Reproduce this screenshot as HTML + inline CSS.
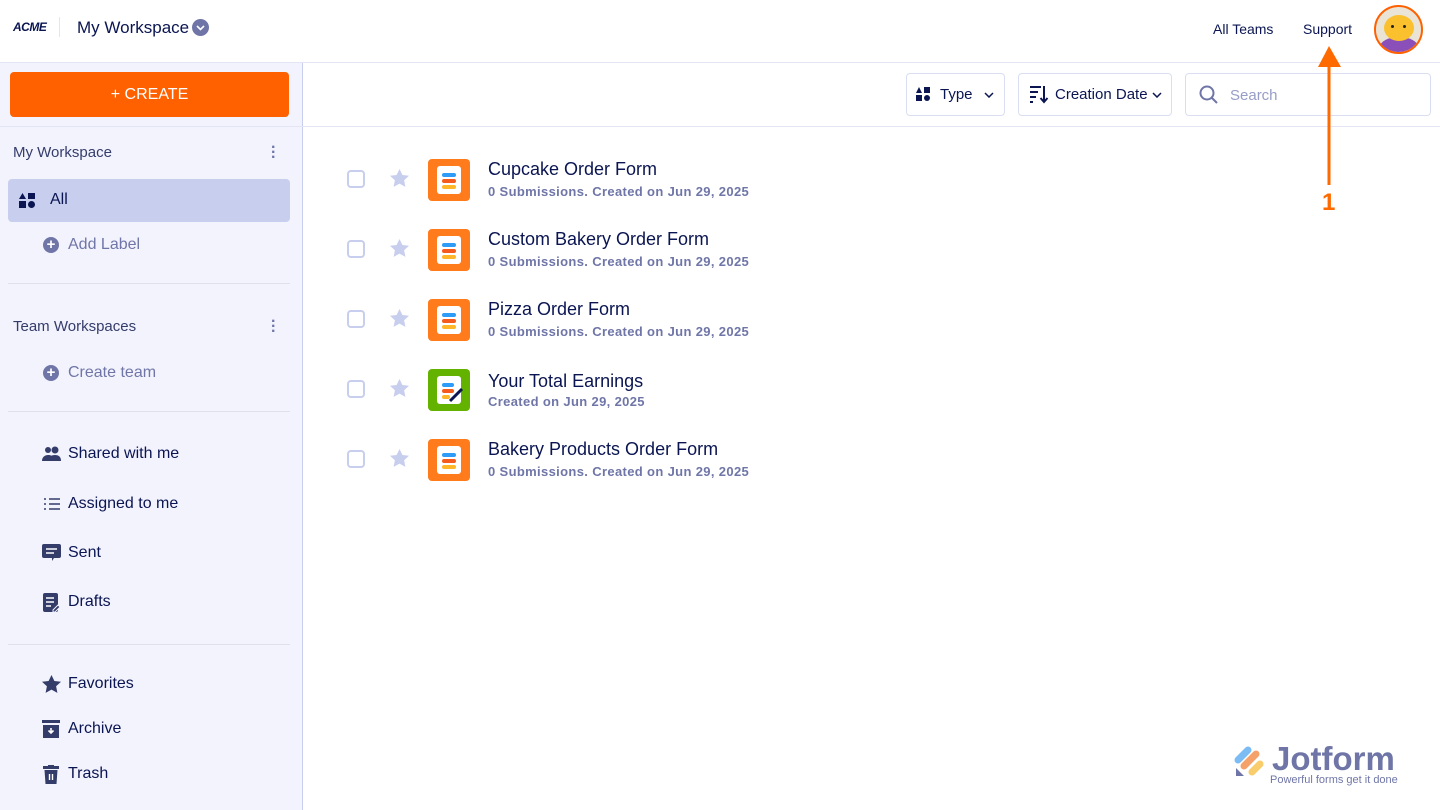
<!DOCTYPE html>
<html><head><meta charset="utf-8"><style>
*{margin:0;padding:0;box-sizing:border-box}
body{width:1440px;height:810px;overflow:hidden;background:#fff;font-family:"Liberation Sans",sans-serif;color:#0a1551;position:relative}
.a{position:absolute;white-space:nowrap}
.hdr{left:0;top:0;width:1440px;height:63px;border-bottom:1px solid #e3e5f5;background:#fff}
.side{left:0;top:63px;width:303px;height:747px;background:#f3f3fe;border-right:1px solid #c8ceed}
.bar{left:303px;top:63px;width:1137px;height:64px;border-bottom:1px solid #e3e5f5}
.t{font-size:16px}
.sec{font-size:15px;color:#343c6a}
.mut{color:#6f76a7}
.hr{left:8px;width:282px;height:1px;background:#dfe1ea}
.btn{border:1px solid #dadef3;border-radius:4px;background:#fff;height:43px;top:73px}
.row{width:1440px;height:70px}
.row .cb{width:18px;height:18px;border:2px solid #c8ceed;border-radius:4px;background:#fff}
.ti{font-size:18px;color:#0a1551}
.sub{font-size:13px;color:#6f76a7;font-weight:bold;letter-spacing:0.35px}
.ic{width:42px;height:42px;border-radius:4px;background:#ff7b1c}
.ic i{position:absolute;left:9px;top:7px;width:24px;height:28px;background:#fff;border-radius:3px}
.ic b{position:absolute;left:14px;width:14px;height:3.5px;border-radius:2px}
</style></head><body>
<div class="a hdr"></div>
<div class="a" style="left:13px;top:20px;font-size:12px;font-weight:900;font-style:italic;letter-spacing:-0.5px">ACME</div>
<div class="a" style="left:59px;top:17px;width:1px;height:20px;background:#e3e5f5"></div>
<div class="a t" style="left:77px;top:18px;font-size:17px;color:#0a1551">My Workspace</div>
<div class="a" style="left:192px;top:19px;width:17px;height:17px;border-radius:50%;background:#6f76a7"><svg width="17" height="17"><path d="M5 7l3.5 3.5L12 7" stroke="#fff" stroke-width="1.6" fill="none"/></svg></div>
<div class="a" style="left:1213px;top:21px;font-size:14px">All Teams</div>
<div class="a" style="left:1303px;top:21px;font-size:14px">Support</div>
<div class="a" style="left:1374px;top:5px;width:49px;height:49px;border-radius:50%;border:2px solid #ff6100;background:#e9e4d6;overflow:hidden">
<div class="a" style="left:4px;top:30px;width:38px;height:20px;border-radius:50% 50% 0 0;background:#8a4fb8"></div>
<div class="a" style="left:8px;top:8px;width:30px;height:26px;border-radius:50%;background:#fbc02d"></div>
<div class="a" style="left:15px;top:18px;width:3px;height:3px;border-radius:50%;background:#222"></div>
<div class="a" style="left:27px;top:18px;width:3px;height:3px;border-radius:50%;background:#222"></div></div>

<div class="a side"></div>
<div class="a" style="left:10px;top:72px;width:279px;height:45px;background:#ff6100;border-radius:4px;color:#fff;font-size:16px;text-align:center;line-height:45px">+ CREATE</div>
<div class="a" style="left:0;top:126px;width:303px;height:1px;background:#e3e5f5"></div>
<div class="a sec" style="left:13px;top:144px">My Workspace</div>
<div class="a" style="left:271px;top:145px;color:#6f76a7;font-size:16px;font-weight:bold;line-height:5px">·<br>·<br>·</div>
<div class="a" style="left:8px;top:179px;width:282px;height:43px;background:#c8ceed;border-radius:4px"></div>
<svg class="a" style="left:19px;top:193px" width="17" height="15"><path d="M0 6L3.5 0L7 6Z" fill="#0a1551"/><rect x="9" y="0" width="7" height="6" fill="#0a1551"/><rect x="0" y="8" width="7" height="7" fill="#0a1551"/><circle cx="12.5" cy="11.5" r="3.5" fill="#0a1551"/></svg>
<div class="a t" style="left:50px;top:191px">All</div>
<div class="a" style="left:43px;top:237px;width:16px;height:16px;border-radius:50%;background:#6f76a7;color:#fff;font-size:15px;line-height:16px;text-align:center;font-weight:bold">+</div>
<div class="a t mut" style="left:68px;top:236px">Add Label</div>
<div class="a hr" style="top:283px"></div>
<div class="a sec" style="left:13px;top:318px">Team Workspaces</div>
<div class="a" style="left:271px;top:319px;color:#6f76a7;font-size:16px;font-weight:bold;line-height:5px">·<br>·<br>·</div>
<div class="a" style="left:43px;top:365px;width:16px;height:16px;border-radius:50%;background:#6f76a7;color:#fff;font-size:15px;line-height:16px;text-align:center;font-weight:bold">+</div>
<div class="a t mut" style="left:68px;top:364px">Create team</div>
<div class="a hr" style="top:411px"></div>
<svg class="a" style="left:42px;top:446px" width="20" height="16" fill="#343c6a"><circle cx="6" cy="4" r="3"/><circle cx="13" cy="4" r="3.5"/><path d="M0 15c0-4 3-6 6-6s4 1 4 2v4z M6 15c0-4 3-6 7-6s6 2 6 6z"/></svg>
<div class="a t" style="left:68px;top:445px">Shared with me</div>
<svg class="a" style="left:43px;top:497px" width="17" height="14" stroke="#343c6a" stroke-width="1.5"><path d="M6 2h11M6 7h11M6 12h11M1 2h2M1 7h2M1 12h2"/></svg>
<div class="a t" style="left:68px;top:495px">Assigned to me</div>
<svg class="a" style="left:42px;top:544px" width="19" height="18" fill="#343c6a"><path d="M2 0h15a2 2 0 0 1 2 2v10a2 2 0 0 1-2 2H12l-2 3v-3H2a2 2 0 0 1-2-2V2a2 2 0 0 1 2-2z"/><path d="M4 5h11M4 9h8" stroke="#fff" stroke-width="1.6"/></svg>
<div class="a t" style="left:68px;top:544px">Sent</div>
<svg class="a" style="left:43px;top:593px" width="17" height="19" fill="#343c6a"><rect width="15" height="19" rx="2"/><path d="M3 5h8M3 9h8M3 13h5" stroke="#fff" stroke-width="1.5"/><path d="M10 17l5-5 2 2-5 5h-2z" stroke="#f3f3fe" stroke-width="1"/></svg>
<div class="a t" style="left:68px;top:593px">Drafts</div>
<div class="a hr" style="top:644px"></div>
<svg class="a" style="left:42px;top:675px" width="19" height="18"><path d="M9.5 0l2.9 6 6.6.8-4.9 4.5 1.3 6.6-5.9-3.3-5.9 3.3 1.3-6.6L0 6.8 6.6 6z" fill="#343c6a"/></svg>
<div class="a t" style="left:68px;top:675px">Favorites</div>
<svg class="a" style="left:42px;top:720px" width="18" height="18" fill="#343c6a"><rect width="18" height="3"/><rect x="1" y="5" width="16" height="13"/><path d="M9 8v5M6.5 10.5L9 13l2.5-2.5" stroke="#fff" stroke-width="1.6" fill="none"/></svg>
<div class="a t" style="left:68px;top:720px">Archive</div>
<svg class="a" style="left:43px;top:765px" width="16" height="19" fill="#343c6a"><rect x="0" y="1" width="16" height="3"/><rect x="5" y="0" width="6" height="2"/><path d="M1.5 5h13l-1 14h-11z"/><path d="M6.5 9v6M9.5 9v6" stroke="#fff" stroke-width="1.4"/></svg>
<div class="a t" style="left:68px;top:765px">Trash</div>

<div class="a bar"></div>
<div class="a btn" style="left:906px;width:99px"></div>
<svg class="a" style="left:916px;top:87px" width="15" height="14"><path d="M0 6L3 0L6 6Z" fill="#0a1551"/><rect x="8" y="0" width="6" height="6" fill="#0a1551"/><rect x="0" y="8" width="6" height="6" fill="#0a1551"/><circle cx="11" cy="11" r="3" fill="#0a1551"/></svg>
<div class="a" style="left:940px;top:86px;font-size:15px">Type</div>
<svg class="a" style="left:984px;top:92px" width="10" height="6"><path d="M1 1l4 4 4-4" stroke="#0a1551" stroke-width="1.5" fill="none"/></svg>
<div class="a btn" style="left:1018px;width:154px"></div>
<svg class="a" style="left:1029px;top:84px" width="20" height="20" stroke="#0a1551" stroke-width="2"><path d="M1 3h11M1 8h8M1 13h6M1 18h3M15 2v15M11.5 14l3.5 4 3.5-4" fill="none"/></svg>
<div class="a" style="left:1055px;top:86px;font-size:15px">Creation Date</div>
<svg class="a" style="left:1152px;top:92px" width="10" height="6"><path d="M1 1l4 4 4-4" stroke="#0a1551" stroke-width="1.5" fill="none"/></svg>
<div class="a btn" style="left:1185px;width:246px"></div>
<svg class="a" style="left:1199px;top:85px" width="20" height="20" stroke="#6f76a7" stroke-width="2" fill="none"><circle cx="8" cy="8" r="6.5"/><path d="M13 13l5 5"/></svg>
<div class="a" style="left:1230px;top:87px;font-size:15px;color:#979dc6">Search</div>

<svg class="a" style="left:1310px;top:40px" width="40" height="175"><path d="M19 12 L19 145" stroke="#ff6a00" stroke-width="3"/><path d="M8 27 L19 6 L31 27 Z" fill="#ff6a00"/><text x="12" y="170" font-family="Liberation Sans" font-weight="bold" font-size="24" fill="#ff6a00">1</text></svg>

<!-- rows -->
<div class="a row" style="left:0;top:0">
<div class="a cb" style="left:347px;top:170px"></div>
<svg class="a" style="left:390px;top:169px" width="19" height="18"><path d="M9.5 0l2.9 6 6.6.8-4.9 4.5 1.3 6.6-5.9-3.3-5.9 3.3 1.3-6.6L0 6.8 6.6 6z" fill="#c8ceed"/></svg>
<div class="a ic" style="left:428px;top:159px"><i></i><b style="top:14px;background:#2d9cf8"></b><b style="top:20px;background:#f45b1d"></b><b style="top:26px;background:#ffb629"></b></div>
<div class="a ti" style="left:488px;top:159px">Cupcake Order Form</div>
<div class="a sub" style="left:488px;top:184px">0 Submissions. Created on Jun 29, 2025</div>
</div>
<div class="a row" style="left:0;top:70px">
<div class="a cb" style="left:347px;top:170px"></div>
<svg class="a" style="left:390px;top:169px" width="19" height="18"><path d="M9.5 0l2.9 6 6.6.8-4.9 4.5 1.3 6.6-5.9-3.3-5.9 3.3 1.3-6.6L0 6.8 6.6 6z" fill="#c8ceed"/></svg>
<div class="a ic" style="left:428px;top:159px"><i></i><b style="top:14px;background:#2d9cf8"></b><b style="top:20px;background:#f45b1d"></b><b style="top:26px;background:#ffb629"></b></div>
<div class="a ti" style="left:488px;top:159px">Custom Bakery Order Form</div>
<div class="a sub" style="left:488px;top:184px">0 Submissions. Created on Jun 29, 2025</div>
</div>
<div class="a row" style="left:0;top:140px">
<div class="a cb" style="left:347px;top:170px"></div>
<svg class="a" style="left:390px;top:169px" width="19" height="18"><path d="M9.5 0l2.9 6 6.6.8-4.9 4.5 1.3 6.6-5.9-3.3-5.9 3.3 1.3-6.6L0 6.8 6.6 6z" fill="#c8ceed"/></svg>
<div class="a ic" style="left:428px;top:159px"><i></i><b style="top:14px;background:#2d9cf8"></b><b style="top:20px;background:#f45b1d"></b><b style="top:26px;background:#ffb629"></b></div>
<div class="a ti" style="left:488px;top:159px">Pizza Order Form</div>
<div class="a sub" style="left:488px;top:184px">0 Submissions. Created on Jun 29, 2025</div>
</div>
<div class="a row" style="left:0;top:210px">
<div class="a cb" style="left:347px;top:170px"></div>
<svg class="a" style="left:390px;top:169px" width="19" height="18"><path d="M9.5 0l2.9 6 6.6.8-4.9 4.5 1.3 6.6-5.9-3.3-5.9 3.3 1.3-6.6L0 6.8 6.6 6z" fill="#c8ceed"/></svg>
<div class="a ic" style="left:428px;top:159px;background:#64b200"><i></i><b style="top:14px;background:#2d9cf8;width:12px"></b><b style="top:20px;background:#f45b1d;width:12px"></b><b style="top:26px;background:#ffb629;width:8px"></b><svg class="a" style="left:20px;top:18px" width="16" height="16"><path d="M2 14L14 2" stroke="#0a1551" stroke-width="3"/></svg></div>
<div class="a ti" style="left:488px;top:161px">Your Total Earnings</div>
<div class="a sub" style="left:488px;top:184px">Created on Jun 29, 2025</div>
</div>
<div class="a row" style="left:0;top:280px">
<div class="a cb" style="left:347px;top:170px"></div>
<svg class="a" style="left:390px;top:169px" width="19" height="18"><path d="M9.5 0l2.9 6 6.6.8-4.9 4.5 1.3 6.6-5.9-3.3-5.9 3.3 1.3-6.6L0 6.8 6.6 6z" fill="#c8ceed"/></svg>
<div class="a ic" style="left:428px;top:159px"><i></i><b style="top:14px;background:#2d9cf8"></b><b style="top:20px;background:#f45b1d"></b><b style="top:26px;background:#ffb629"></b></div>
<div class="a ti" style="left:488px;top:159px">Bakery Products Order Form</div>
<div class="a sub" style="left:488px;top:184px">0 Submissions. Created on Jun 29, 2025</div>
</div>

<!-- watermark -->
<svg class="a" style="left:1234px;top:746px" width="34" height="32"><path d="M4 14L14 4" stroke="#7cbcf5" stroke-width="7" stroke-linecap="round"/><path d="M10 20L22 8" stroke="#f5a26a" stroke-width="7" stroke-linecap="round"/><path d="M18 26L26 18" stroke="#f9cd6c" stroke-width="7" stroke-linecap="round"/><path d="M2 22v8h8z" fill="#6f76a7"/></svg>
<div class="a" style="left:1272px;top:740px;font-size:33px;font-weight:bold;color:#6f76a7">Jotform</div>
<div class="a" style="left:1270px;top:774px;font-size:11px;color:#6f76a7">Powerful forms get it done</div>
</body></html>
